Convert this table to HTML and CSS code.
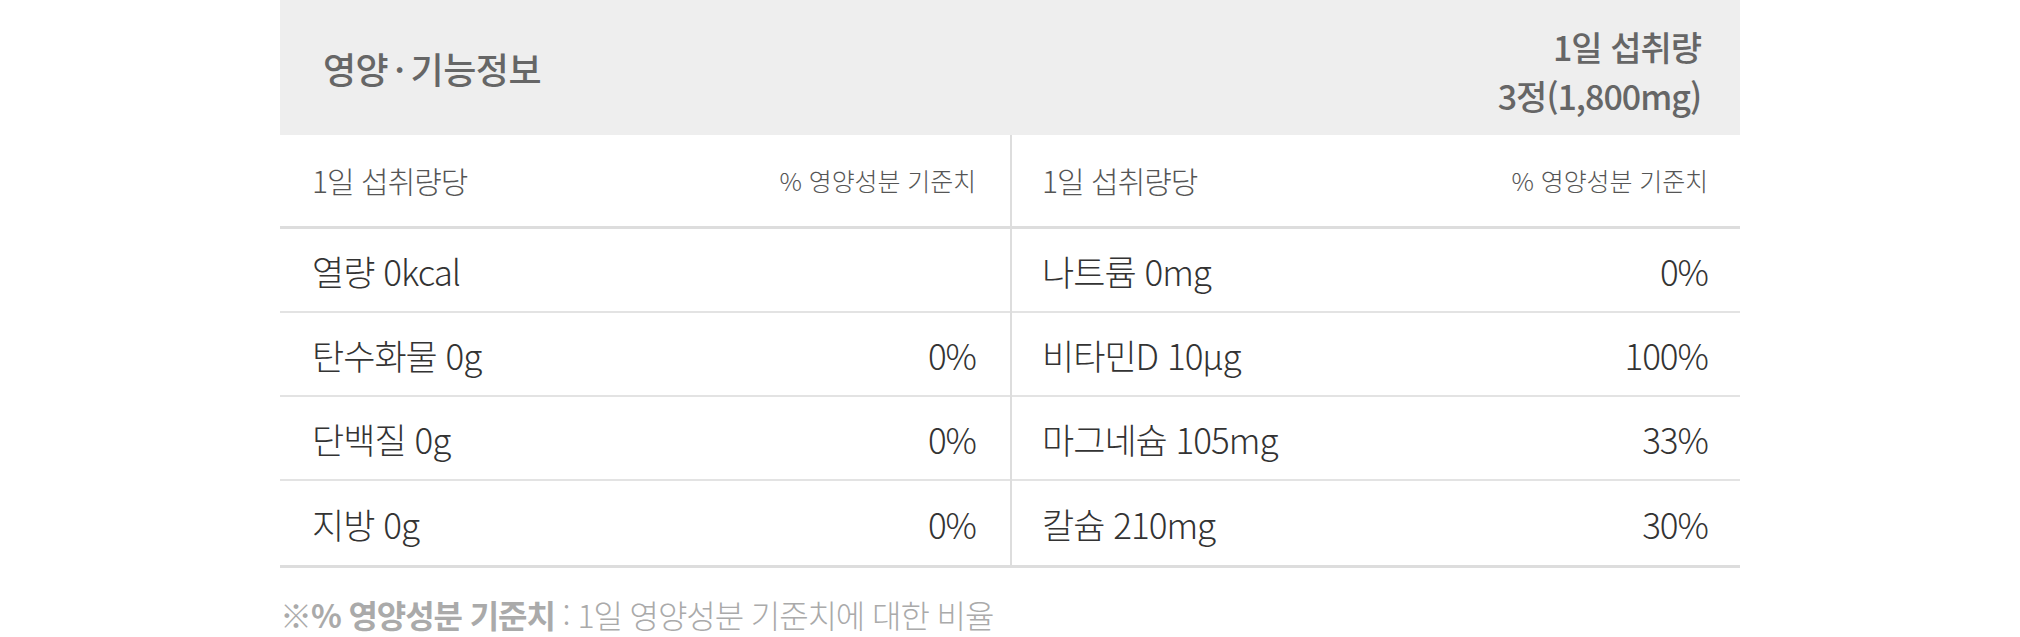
FILE: index.html
```html
<!DOCTYPE html>
<html lang="ko">
<head>
<meta charset="utf-8">
<title>영양·기능정보</title>
<link rel="stylesheet" href="styles.css">
</head>
<body>
<section class="nutri">
  <div class="nutri-head">
    <h2 class="nutri-title">영양<span class="dot">·</span>기능정보</h2>
    <div class="nutri-serving">
      <span>1일 섭취량</span>
      <span>3정(1,800mg)</span>
    </div>
  </div>
  <div class="nutri-body">
    <div class="nutri-col">
      <div class="col-head"><span class="ch-left">1일 섭취량당</span><span class="ch-right">% 영양성분 기준치</span></div>
      <div class="row"><span>열량 0kcal</span><span></span></div>
      <div class="row"><span>탄수화물 0g</span><span>0%</span></div>
      <div class="row"><span>단백질 0g</span><span>0%</span></div>
      <div class="row"><span>지방 0g</span><span>0%</span></div>
    </div>
    <div class="nutri-col nutri-col-right">
      <div class="col-head"><span class="ch-left">1일 섭취량당</span><span class="ch-right">% 영양성분 기준치</span></div>
      <div class="row"><span>나트륨 0mg</span><span>0%</span></div>
      <div class="row"><span>비타민D 10μg</span><span>100%</span></div>
      <div class="row"><span>마그네슘 105mg</span><span>33%</span></div>
      <div class="row"><span>칼슘 210mg</span><span>30%</span></div>
    </div>
  </div>
  <p class="nutri-note">※<strong>% 영양성분 기준치</strong> : 1일 영양성분 기준치에 대한 비율</p>
</section>
</body>
</html>
```

FILE: styles.css
```css
html, body {
  margin: 0;
  padding: 0;
  background: #ffffff;
}

body {
  font-family: "Noto Sans CJK KR", "Noto Sans", sans-serif;
}

.nutri {
  width: 1460px;
  margin: 0 auto;
}

.nutri-head {
  height: 135px;
  background: #eeeeee;
  display: flex;
  justify-content: space-between;
  align-items: center;
  padding: 0 39px 0 43px;
  box-sizing: border-box;
}

.nutri-title {
  margin: 0;
  font-size: 36px;
  font-weight: 500;
  color: #666666;
  letter-spacing: -0.5px;
}

.nutri-title .dot {
  margin: 0 6px;
}

.nutri-serving {
  display: flex;
  flex-direction: column;
  align-items: flex-end;
  font-size: 34px;
  font-weight: 500;
  line-height: 49px;
  color: #666666;
  letter-spacing: -1px;
  padding-top: 6px;
}

.nutri-body {
  display: grid;
  grid-template-columns: 1fr 1fr;
  border-bottom: 3px solid #dddddd;
}

.nutri-col {
  display: flex;
  flex-direction: column;
}

.nutri-col-right {
  border-left: 2px solid #dddddd;
}

.col-head {
  height: 94px;
  box-sizing: border-box;
  border-bottom: 3px solid #dddddd;
  display: flex;
  justify-content: space-between;
  align-items: center;
  padding: 0 34px 2px 32px;
  color: #555555;
  font-weight: 300;
}

.nutri-col-right .col-head,
.nutri-col-right .row {
  padding-left: 30px;
  padding-right: 32px;
}

.ch-left {
  font-size: 30px;
  letter-spacing: -1px;
}

.ch-right {
  font-size: 25px;
  letter-spacing: -0.1px;
}

.row {
  height: 84px;
  box-sizing: border-box;
  border-bottom: 2px solid #e3e3e3;
  display: flex;
  justify-content: space-between;
  align-items: center;
  padding: 0 34px 0 32px;
  font-size: 35px;
  font-weight: 300;
  color: #333333;
  letter-spacing: -1px;
}

.row:last-child {
  border-bottom: 0;
}

.nutri-note {
  margin: 28px 0 0;
  font-size: 32px;
  font-weight: 300;
  color: #aaaaaa;
  letter-spacing: -1.1px;
  line-height: 36px;
}

.nutri-note strong {
  font-weight: 700;
}
```
